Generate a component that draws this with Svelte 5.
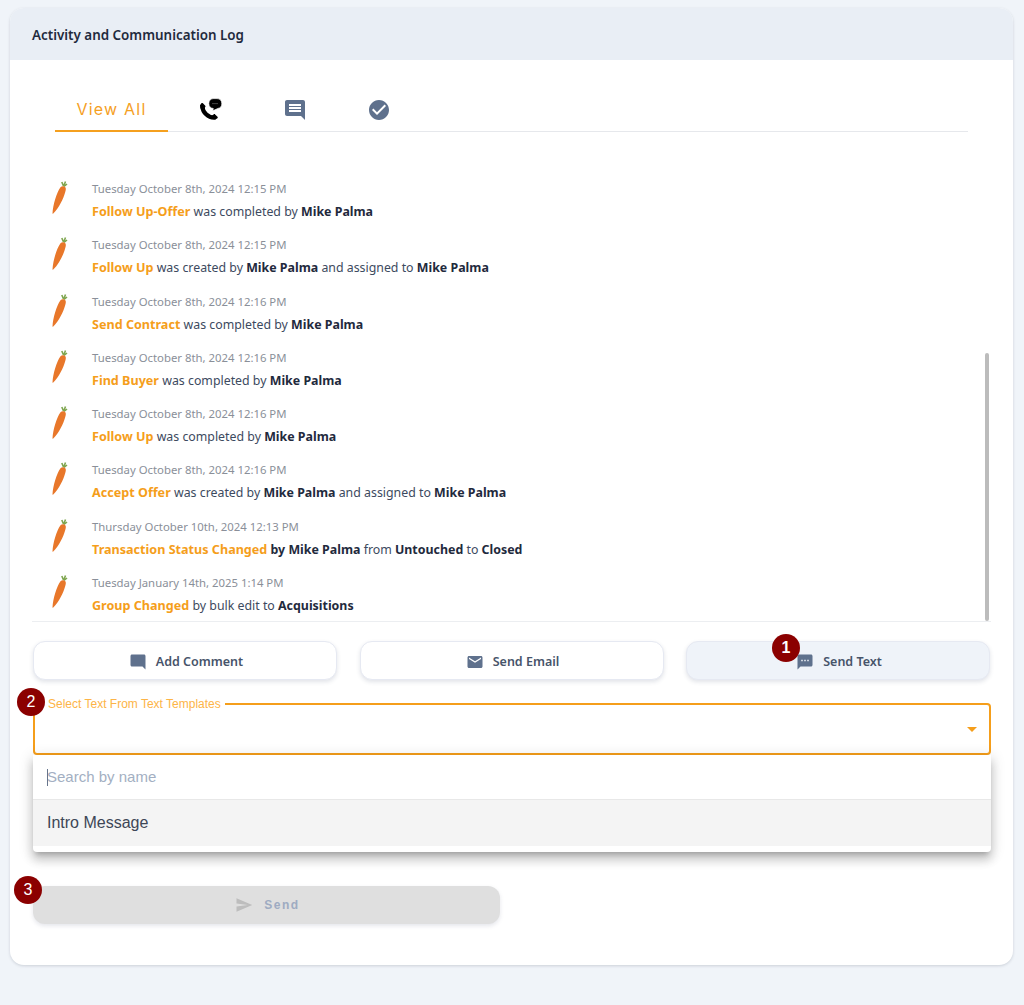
<script>
  const entries = [
    { date: 'Tuesday October 8th, 2024 12:15 PM', parts: [['o', 'Follow Up-Offer'], ['', ' was completed by '], ['b', 'Mike Palma']] },
    { date: 'Tuesday October 8th, 2024 12:15 PM', parts: [['o', 'Follow Up'], ['', ' was created by '], ['b', 'Mike Palma'], ['', ' and assigned to '], ['b', 'Mike Palma']] },
    { date: 'Tuesday October 8th, 2024 12:16 PM', parts: [['o', 'Send Contract'], ['', ' was completed by '], ['b', 'Mike Palma']] },
    { date: 'Tuesday October 8th, 2024 12:16 PM', parts: [['o', 'Find Buyer'], ['', ' was completed by '], ['b', 'Mike Palma']] },
    { date: 'Tuesday October 8th, 2024 12:16 PM', parts: [['o', 'Follow Up'], ['', ' was completed by '], ['b', 'Mike Palma']] },
    { date: 'Tuesday October 8th, 2024 12:16 PM', parts: [['o', 'Accept Offer'], ['', ' was created by '], ['b', 'Mike Palma'], ['', ' and assigned to '], ['b', 'Mike Palma']] },
    { date: 'Thursday October 10th, 2024 12:13 PM', parts: [['o', 'Transaction Status Changed'], ['b', ' by Mike Palma'], ['', ' from '], ['b', 'Untouched'], ['', ' to '], ['b', 'Closed']] },
    { date: 'Tuesday January 14th, 2025 1:14 PM', parts: [['o', 'Group Changed'], ['', ' by bulk edit to '], ['b', 'Acquisitions']] }
  ];
</script>

<main class="page">
  <section class="card">
    <header class="card-head">Activity and Communication Log</header>

    <div class="tabs">
      <button class="tab active">View All</button>
      <button class="tab icon" aria-label="Calls">
        <svg class="phone" width="24" height="24" viewBox="0 0 24 24">
          <path d="M3.300 9.500C3.800 15.500 9 20.500 15.200 20.700" stroke="#000" stroke-width="4.200" fill="none" stroke-linecap="round" />
          <path d="M1 8.200 2.400 6.300c.4-.5 1.100-.5 1.500-.1l2.400 2.600c.3.400.3 1 0 1.300L4.200 12.800 1.600 11.500zM12.500 19.200l2.300-1.900c.4-.3 1-.3 1.300.1l2.400 2.300c.4.400.3 1.100-.1 1.500l-2 1.400-3.300-.8z" fill="#000" />
          <path d="M14 1.600h4a5 5 0 0 1 .8 9.900l-5 2.300.5-2.300A5 5 0 0 1 14 1.600z" fill="#000" stroke="#fff" stroke-width=".7" />
          <circle cx="14" cy="6.600" r=".55" fill="#888" /><circle cx="16" cy="6.600" r=".55" fill="#888" /><circle cx="18" cy="6.600" r=".55" fill="#888" />
        </svg>
      </button>
      <button class="tab icon" aria-label="Comments">
        <svg width="24" height="24" viewBox="0 0 24 24" fill="#5f718d"><path d="M21.990 4c0-1.100-.89-2-1.990-2H4c-1.100 0-2 .9-2 2v12c0 1.100.9 2 2 2h14l4 4-.01-18zM18 14H6v-2h12v2zm0-3H6V9h12v2zm0-3H6V6h12v2z" /></svg>
      </button>
      <button class="tab icon" aria-label="Tasks">
        <svg width="24" height="24" viewBox="0 0 24 24" fill="#5f718d"><path d="M12 2C6.480 2 2 6.480 2 12s4.480 10 10 10 10-4.480 10-10S17.520 2 12 2zm-2 15l-5-5 1.410-1.410L10 14.170l7.590-7.590L19 8l-9 9z" /></svg>
      </button>
    </div>

    <div class="log">
      <ul>
        {#each entries as entry}
          <li>
            <svg class="carrot" width="20" height="34" viewBox="0 0 20 34">
              <path d="M13.500 5 11.800 1M13.800 5 15.500 0.500M14 5.500 17 3" stroke="#7fa650" stroke-width="1.600" fill="none" />
              <path d="M10.500 6.200c1.400-1.400 4-1.200 5 .4.600 1.300.3 3-.4 5C13.600 17.500 9 27 3.300 32.600c-.4.300-.8.100-.8-.4C3 24 6.500 11.500 10.500 6.200z" fill="#e8772a" />
            </svg>
            <div class="text">
              <div class="date">{entry.date}</div>
              <div class="msg">
                {#each entry.parts as [kind, value]}<span class={kind}>{value}</span>{/each}
              </div>
            </div>
          </li>
        {/each}
      </ul>
      <div class="thumb"></div>
    </div>

    <div class="actions">
      <button class="action">
        <svg width="18" height="18" viewBox="0 0 24 24" fill="#5f718d"><path d="M21.990 4c0-1.100-.89-2-1.990-2H4c-1.100 0-2 .9-2 2v12c0 1.100.9 2 2 2h14l4 4-.01-18z" /></svg>
        Add Comment
      </button>
      <button class="action">
        <svg width="18" height="18" viewBox="0 0 24 24" fill="#5f718d"><path d="M20 4H4c-1.100 0-1.990.9-1.990 2L2 18c0 1.100.9 2 2 2h16c1.100 0 2-.9 2-2V6c0-1.100-.9-2-2-2zm0 4l-8 5-8-5V6l8 5 8-5v2z" /></svg>
        Send Email
      </button>
      <button class="action current">
        <svg width="18" height="18" viewBox="0 0 24 24" fill="#5f718d"><path d="M20 2H4c-1.100 0-1.990.9-1.990 2L2 22l4-4h14c1.100 0 2-.9 2-2V4c0-1.100-.9-2-2-2zM9 11H7V9h2v2zm4 0h-2V9h2v2zm4 0h-2V9h2v2z" /></svg>
        Send Text
        <span class="step one">1</span>
      </button>
    </div>

    <div class="picker">
      <fieldset class="select">
        <legend>Select Text From Text Templates</legend>
        <svg class="caret" width="24" height="24" viewBox="0 0 24 24" fill="#f59e1b"><path d="M7 10l5 5 5-5z" /></svg>
      </fieldset>
      <span class="step two">2</span>
      <div class="menu">
        <div class="search"><span class="cursor"></span>Search by name</div>
        <div class="option">Intro Message</div>
      </div>
    </div>

    <div class="send-row">
      <button class="send" disabled>
        <svg width="18" height="18" viewBox="0 0 24 24" fill="#bdbdbd"><path d="M2.010 21L23 12 2.010 3 2 10l15 2-15 2z" /></svg>
        Send
      </button>
      <span class="step three">3</span>
    </div>
  </section>
</main>

<style>
  :global(body) {
    background: #f0f4f9;
  }

  .page {
    padding: 8px 11px 40px 10px;
    font-family: 'Noto Sans', sans-serif;
  }

  .card {
    background: #fff;
    border-radius: 14px;
    box-shadow: 0 1px 3px rgba(60, 70, 90, 0.2);
    overflow: hidden;
    height: 957px;
    padding: 0 22px;
    box-sizing: border-box;
  }

  .card-head {
    margin: 0 -22px;
    height: 52px;
    line-height: 55px;
    padding-left: 22px;
    background: #e9eef5;
    color: #1f2a3d;
    font-size: 13.400px;
    font-weight: 600;
  }

  button {
    font-family: inherit;
    border: 0;
    background: none;
    padding: 0;
  }

  .tabs {
    display: flex;
    margin: 26px 23px 0 23px;
    height: 45px;
    border-bottom: 1px solid #e6e8ec;
  }

  .tab {
    width: 84.500px;
    height: 46px;
    display: flex;
    align-items: center;
    justify-content: center;
  }

  .tab.icon {
    padding-top: 2px;
  }

  .phone {
    margin: -2px 0 0 1px;
  }

  .tab.active {
    width: 113px;
    padding-top: 2px;
    color: #f5a01f;
    font-family: Inter, sans-serif;
    font-size: 16px;
    letter-spacing: 1.200px;
    border-bottom: 2px solid #f5a01f;
    box-sizing: border-box;
  }

  .log {
    position: relative;
    margin-top: 40px;
    height: 449px;
    border-bottom: 1px solid #eceef1;
    overflow: hidden;
  }

  .log ul {
    list-style: none;
    margin: 0;
    padding: 0;
  }

  .log li {
    display: flex;
    height: 56.250px;
  }

  .carrot {
    margin: 9px 0 0 18px;
    flex: none;
  }

  .text {
    margin-left: 22px;
  }

  .date {
    margin-top: 8px;
    font-size: 11.350px;
    line-height: 17px;
    color: #8a8f99;
  }

  .msg {
    margin-top: 6px;
    font-size: 12.350px;
    line-height: 17px;
    color: #3d4a60;
  }

  .msg .o {
    font-size: 12.600px;
    color: #f59e1b;
    font-weight: 700;
  }

  .msg .b {
    font-size: 12.400px;
    color: #1f2a3d;
    font-weight: 700;
  }

  .thumb {
    position: absolute;
    right: 2px;
    top: 181px;
    width: 4px;
    height: 268px;
    border-radius: 2px;
    background: #bcbcbc;
  }

  .actions {
    display: grid;
    grid-template-columns: repeat(3, 304px);
    gap: 22.500px;
    margin: 19px 0 0 1px;
  }

  .action {
    position: relative;
    height: 39px;
    display: flex;
    align-items: center;
    justify-content: center;
    gap: 9px;
    padding: 2px 0 0 2px;
    border: 1px solid #e6e9f2;
    border-radius: 12px;
    background: #fff;
    color: #47546a;
    font-size: 12.500px;
    font-weight: 600;
    box-shadow: 0 2px 4px rgba(70, 80, 110, 0.16);
  }

  .action.current {
    background: #eff3f9;
  }

  .step {
    position: absolute;
    width: 28px;
    height: 28px;
    border-radius: 50%;
    background: #8b0000;
    color: #fff;
    font-family: 'Liberation Sans', Arial, sans-serif;
    font-size: 16px;
    line-height: 28px;
    text-align: center;
    z-index: 3;
  }

  .step.one {
    left: 85px;
    top: -8px;
  }

  .step.two {
    left: -16px;
    top: -10px;
  }

  .step.three {
    left: -19px;
    top: -10px;
  }

  .picker {
    position: relative;
    margin: 18px 0 0 1px;
  }

  .select {
    position: relative;
    height: 57px;
    margin: 0;
    padding: 0 9px;
    border: 2px solid #f59e1b;
    border-radius: 4px;
    box-sizing: border-box;
    min-width: 0;
  }

  .select legend {
    padding: 0 4px;
    font-family: 'Liberation Sans', Arial, sans-serif;
    font-size: 12px;
    line-height: 12px;
    color: #fdb447;
  }

  .caret {
    position: absolute;
    right: 5px;
    top: 7px;
  }

  .menu {
    position: relative;
    z-index: 2;
    background: #fff;
    height: 97px;
    border-radius: 0 0 4px 4px;
    box-shadow: 0 5px 5px -3px rgba(0, 0, 0, 0.2), 0 8px 10px 1px rgba(0, 0, 0, 0.14), 0 3px 14px 2px rgba(0, 0, 0, 0.12);
  }

  .search {
    height: 44px;
    line-height: 44px;
    padding-left: 14px;
    border-bottom: 1px solid #e8e8e8;
    font-family: 'Liberation Sans', Arial, sans-serif;
    font-size: 15px;
    color: #a3afc2;
    position: relative;
  }

  .cursor {
    position: absolute;
    left: 14px;
    top: 14px;
    width: 1px;
    height: 17px;
    background: #66758c;
  }

  .option {
    height: 46px;
    line-height: 46px;
    padding-left: 14px;
    background: #f4f4f4;
    font-family: 'Liberation Sans', Arial, sans-serif;
    font-size: 16px;
    color: #3d4656;
  }

  .send-row {
    position: relative;
    margin: 34px 0 0 1px;
    width: 467px;
  }

  .send {
    width: 100%;
    height: 38px;
    display: flex;
    align-items: center;
    justify-content: center;
    gap: 11px;
    padding-left: 2px;
    border-radius: 12px;
    background: #dfdfdf;
    color: #9eabc2;
    font-family: 'Liberation Sans', Arial, sans-serif;
    font-size: 12px;
    font-weight: 700;
    letter-spacing: 1.500px;
    box-shadow: 0 2px 4px rgba(70, 80, 110, 0.14);
  }
</style>
